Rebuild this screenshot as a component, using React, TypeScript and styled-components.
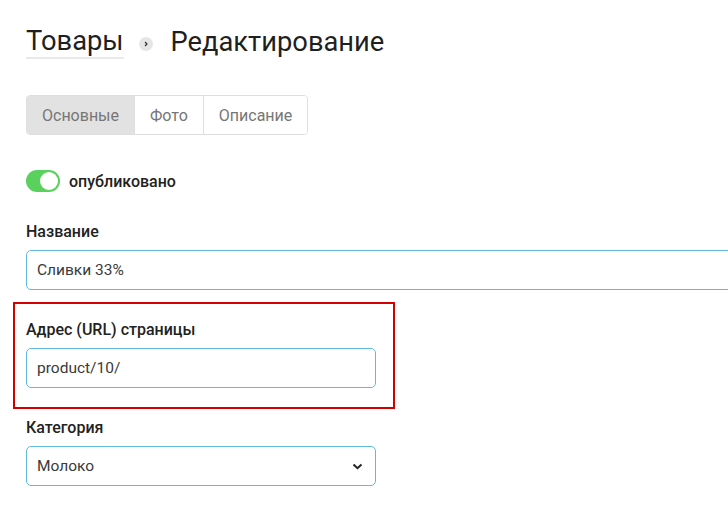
import styled, { createGlobalStyle } from "styled-components";

const GlobalStyle = createGlobalStyle`
  html, body {
    margin: 0;
    padding: 0;
    background: #fff;
    font-family: Roboto, "Liberation Sans", sans-serif;
    overflow: hidden;
  }
`;

const Page = styled.div`
  display: flex;
  flex-direction: column;
  padding: 26px 0 0 26px;
  width: 728px;
  box-sizing: border-box;
`;

const TitleRow = styled.h1`
  display: flex;
  align-items: center;
  margin: 0;
  font-size: 27.3px;
  font-weight: 400;
  color: #1f1f1f;
  line-height: 31px;
`;

const Crumb = styled.span`
  border-bottom: 2px solid #e9e9e9;
`;

const CrumbSep = styled.span`
  display: inline-flex;
  align-items: center;
  justify-content: center;
  width: 14px;
  height: 14px;
  border-radius: 50%;
  background: #e6e6e6;
  margin: 2px 18px 0 15px;
`;

const Tabs = styled.div`
  display: flex;
  align-self: flex-start;
  margin-top: 36px;
  border: 1px solid #dedede;
  border-radius: 4px;
  overflow: hidden;
`;

const Tab = styled.button<{ $active?: boolean }>`
  height: 38px;
  padding: 0 15px;
  border: none;
  border-left: 1px solid ${(p) => (p.$active ? "transparent" : "#dedede")};
  background: ${(p) => (p.$active ? "#e2e2e2" : "#fff")};
  color: #767676;
  font-family: Roboto, "Liberation Sans", sans-serif;
  font-size: 16px;
  cursor: pointer;
  &:first-child {
    border-left: none;
  }
`;

const Form = styled.div`
  display: flex;
  flex-direction: column;
  gap: 31px;
  margin-top: 35px;
`;

const ToggleRow = styled.label`
  display: flex;
  align-items: center;
  gap: 9px;
  font-size: 16px;
  font-weight: 500;
  color: #222;
`;

const Switch = styled.span<{ $on: boolean }>`
  position: relative;
  width: 34px;
  height: 22px;
  border-radius: 11px;
  background: ${(p) => (p.$on ? "#5ad15c" : "#ccc")};
  &::after {
    content: "";
    position: absolute;
    top: 2px;
    left: ${(p) => (p.$on ? "14px" : "2px")};
    width: 18px;
    height: 18px;
    border-radius: 50%;
    background: #fff;
  }
`;

const Field = styled.div`
  display: flex;
  flex-direction: column;
  gap: 9px;
`;

const Label = styled.span`
  font-size: 16px;
  font-weight: 500;
  line-height: 18px;
  color: #222;
`;

const Input = styled.input<{ $wide?: boolean }>`
  box-sizing: border-box;
  width: ${(p) => (p.$wide ? "720px" : "350px")};
  height: 40px;
  padding: 0 10px;
  border: 1px solid #62badb;
  border-radius: 5px;
  font-family: Roboto, "Liberation Sans", sans-serif;
  font-size: 15.5px;
  color: #3a3a3a;
  outline: none;
`;

const SelectBox = styled.div`
  box-sizing: border-box;
  display: flex;
  align-items: center;
  justify-content: space-between;
  width: 350px;
  height: 40px;
  padding: 0 12px 0 10px;
  border: 1px solid #62badb;
  border-radius: 5px;
  font-size: 15.5px;
  color: #3a3a3a;
`;

const Highlight = styled.div`
  align-self: flex-start;
  margin: -19px 0 -21px -13px;
  padding: 17px 17px 19px 11px;
  border: 2px solid #d40000;
`;

export default function App() {
  return (
    <>
      <GlobalStyle />
      <Page>
        <TitleRow>
          <Crumb>Товары</Crumb>
          <CrumbSep>
            <svg width="6" height="6" viewBox="0 0 6 6">
              <path d="M2 1 L4 3 L2 5" fill="none" stroke="#333" strokeWidth="1.2" />
            </svg>
          </CrumbSep>
          <span>Редактирование</span>
        </TitleRow>

        <Tabs>
          <Tab $active>Основные</Tab>
          <Tab>Фото</Tab>
          <Tab>Описание</Tab>
        </Tabs>

        <Form>
          <ToggleRow>
            <Switch $on />
            опубликовано
          </ToggleRow>

          <Field>
            <Label>Название</Label>
            <Input $wide defaultValue="Сливки 33%" />
          </Field>

          <Highlight>
            <Field>
              <Label>Адрес (URL) страницы</Label>
              <Input defaultValue="product/10/" />
            </Field>
          </Highlight>

          <Field>
            <Label>Категория</Label>
            <SelectBox>
              Молоко
              <svg width="11" height="7" viewBox="0 0 11 7">
                <path d="M1.5 1.5 L5.5 5.2 L9.5 1.5" fill="none" stroke="#222" strokeWidth="2" />
              </svg>
            </SelectBox>
          </Field>
        </Form>
      </Page>
    </>
  );
}
